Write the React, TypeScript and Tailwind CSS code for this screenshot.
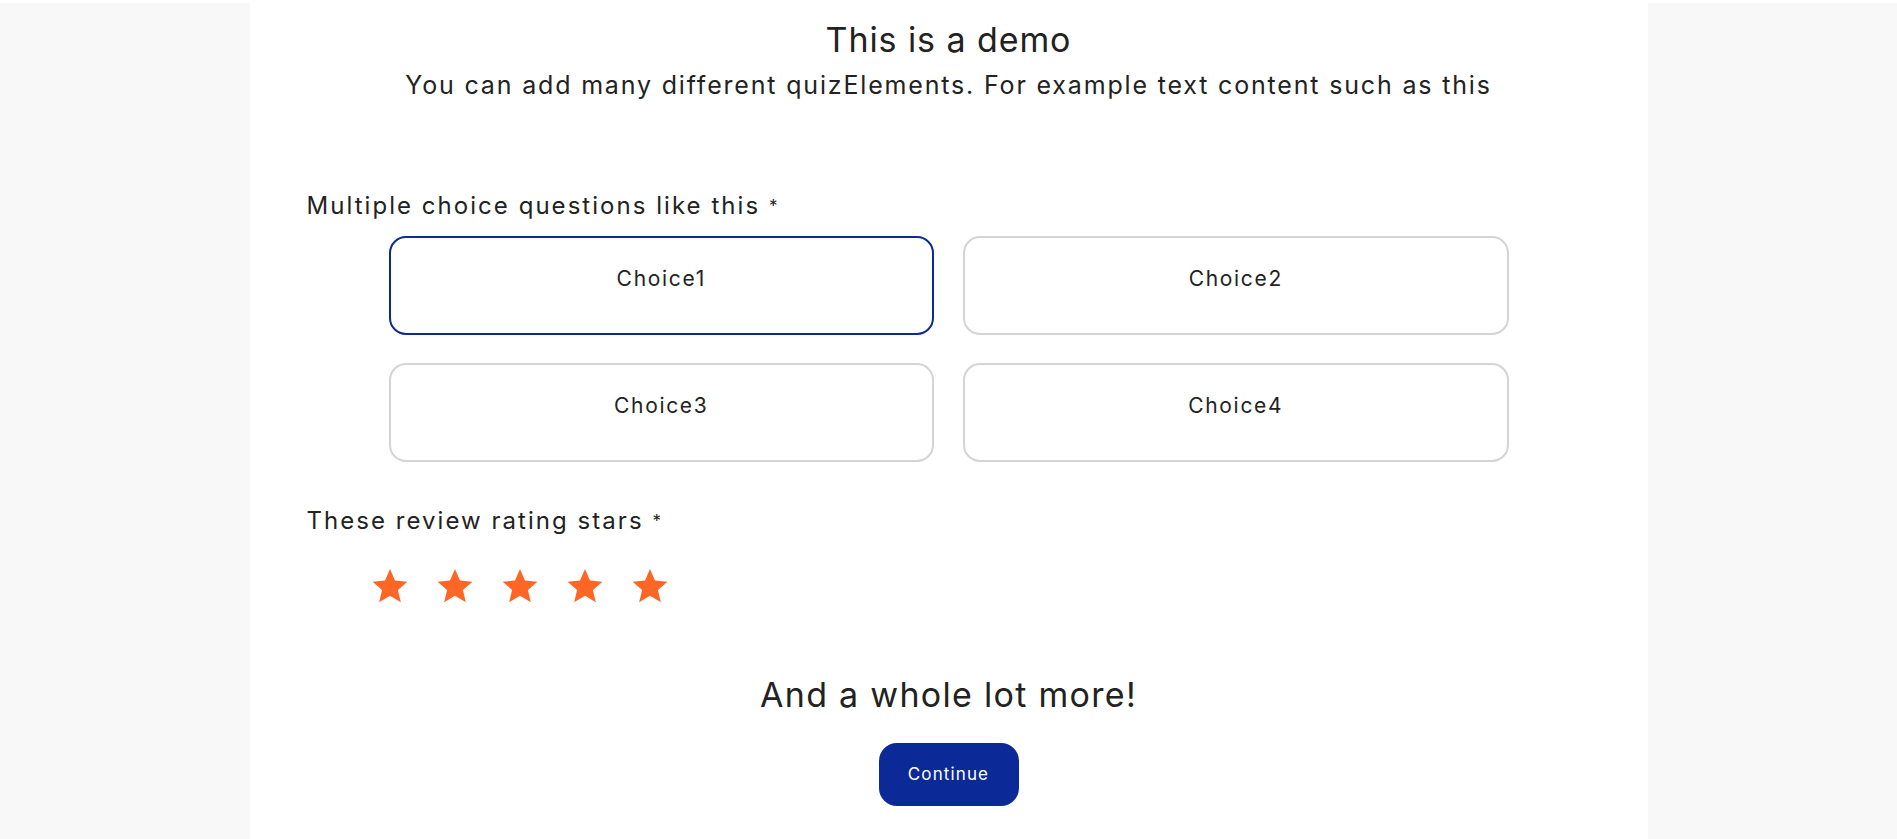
import React from "react";

function Star() {
  return (
    <svg viewBox="0 0 24 24" className="w-[38px] h-[38px]" fill="#fe6625">
      <path d="M12 1.3l3.15 7.3 7.85.65-6 5.2 1.85 7.75L12 18.1l-6.85 4.1 1.85-7.75-6-5.2 7.85-.65z" />
    </svg>
  );
}

export default function App() {
  const choices = ["Choice1", "Choice2", "Choice3", "Choice4"];
  return (
    <div
      className="min-h-[839px] bg-[#f8f8f8] text-[#222222] border-t-[3px] border-white"
      style={{ fontFamily: "Inter, 'Open Sans', sans-serif" }}
    >
      <div className="w-[1398px] mx-auto bg-white min-h-[836px] px-[57px] flex flex-col">
        <h1 className="pt-[17px] text-[34px] leading-[40px] tracking-[0.027em] text-center font-normal">
          This is a demo
        </h1>
        <p className="mt-[9px] text-[25px] leading-[32px] tracking-[0.073em] text-center">
          You can add many different quizElements. For example text content such as this
        </p>
        <div className="mt-[90px] text-[24px] leading-[30px] tracking-[0.085em]">
          Multiple choice questions like this <span className="text-[17px] align-top">*</span>
        </div>
        <div className="mt-[15px] mx-[82px] grid grid-cols-2 gap-x-[29px] gap-y-[28px]">
          {choices.map((c, i) => (
            <div
              key={c}
              className={
                "h-[99px] rounded-[17px] border-[2.5px] flex justify-center items-center pb-[14px] text-[21px] tracking-[0.08em] " +
                (i === 0 ? "border-[#0b2a94]" : "border-[#d4d4d4]")
              }
            >
              {c}
            </div>
          ))}
        </div>
        <div className="mt-[44px] text-[24px] leading-[30px] tracking-[0.085em]">
          These review rating stars <span className="text-[17px] align-top">*</span>
        </div>
        <div className="mt-[31px] ml-[64px] flex gap-[27px]">
          {[0, 1, 2, 3, 4].map((i) => (
            <Star key={i} />
          ))}
        </div>
        <h2 className="mt-[70px] text-[34px] leading-[40px] tracking-[0.038em] text-center">
          And a whole lot more!
        </h2>
        <div className="mt-[28px] flex justify-center">
          <button className="w-[140px] h-[63px] rounded-[18px] bg-[#0b2a97] text-white text-[17px] tracking-[0.066em]">
            Continue
          </button>
        </div>
      </div>
    </div>
  );
}
